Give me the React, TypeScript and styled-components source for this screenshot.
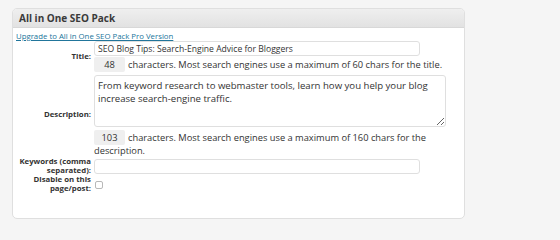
import React from 'react';
import styled, { createGlobalStyle } from 'styled-components';

const GlobalStyle = createGlobalStyle`
  html, body {
    margin: 0;
    padding: 0;
    background: #f5f5f5;
  }
  body {
    font-family: "Open Sans", "DejaVu Sans", sans-serif;
    color: #333;
  }
`;

const Page = styled.div`
  width: 560px;
  height: 235px;
  box-sizing: border-box;
  padding: 8px 0 0 12px;
`;

const Postbox = styled.div`
  width: 453px;
  height: 211px;
  box-sizing: border-box;
  background: #fff;
  border: 1px solid #dfdfdf;
  border-radius: 5px;
  overflow: hidden;
`;

const Handle = styled.h3`
  margin: 0;
  height: 18px;
  line-height: 18px;
  padding: 0 6px;
  font-size: 10px;
  font-weight: 700;
  color: #3a3a3a;
  background: linear-gradient(#efefef, #e2e2e2);
  border-bottom: 1px solid #d8d8d8;
`;

const Inside = styled.div`
  padding: 3px 3px 0 3px;
`;

const UpgradeLink = styled.a`
  display: block;
  height: 10px;
  line-height: 10px;
  font-size: 7.8px;
  color: #21759b;
  text-decoration: underline;
`;

const FormGrid = styled.div`
  display: grid;
  grid-template-columns: 75px 352px;
  column-gap: 3px;
  align-items: center;
`;

const Label = styled.label`
  text-align: right;
  font-weight: 700;
  font-size: 7.8px;
  line-height: 8.5px;
  color: #333;
`;

const Field = styled.div<{ $gap?: number; $top?: number }>`
  display: flex;
  flex-direction: column;
  gap: ${p => p.$gap ?? 1}px;
  margin-top: ${p => p.$top ?? 0}px;
`;

const TextInput = styled.input`
  width: 326px;
  height: 15px;
  box-sizing: border-box;
  margin: 0;
  padding: 0 3px;
  border: 1px solid #dfdfdf;
  border-radius: 3px;
  font-family: inherit;
  font-size: 8.6px;
  color: #333;
  background: #fff;
  outline: none;
`;

const TextArea = styled.textarea`
  width: 352px;
  height: 52px;
  box-sizing: border-box;
  margin: 0;
  padding: 3px 3px;
  border: 1px solid #dfdfdf;
  border-radius: 3px;
  font-family: inherit;
  font-size: 9.6px;
  line-height: 13px;
  color: #333;
  outline: none;
`;

const Counter = styled.p`
  margin: 0;
  font-size: 9.3px;
  line-height: 12px;
  color: #333;
`;

const CountBox = styled.span`
  display: inline-block;
  width: 31px;
  height: 15px;
  line-height: 15px;
  margin-right: 3px;
  text-align: center;
  background: #efefef;
  border-radius: 2px;
  color: #333;
`;

const Check = styled.input`
  appearance: none;
  width: 8px;
  height: 8px;
  margin: 0 0 0 1px;
  border: 1px solid #b8b8b8;
  border-radius: 2px;
  background: #fff;
`;

const CheckCell = styled.div`
  display: flex;
  align-items: center;
  height: 17px;
  margin-top: 2px;
`;

export default function App() {
  return (
    <Page>
      <GlobalStyle />
      <Postbox>
        <Handle>All in One SEO Pack</Handle>
        <Inside>
          <UpgradeLink href="#">Upgrade to All in One SEO Pack Pro Version</UpgradeLink>
          <FormGrid>
            <Label>Title:</Label>
            <Field>
              <TextInput defaultValue="SEO Blog Tips: Search-Engine Advice for Bloggers" />
              <Counter>
                <CountBox>48</CountBox>characters. Most search engines use a maximum of 60 chars for the title.
              </Counter>
            </Field>

            <Label>Description:</Label>
            <Field $gap={3} $top={3}>
              <TextArea defaultValue="From keyword research to webmaster tools, learn how you help your blog increase search-engine traffic." />
              <Counter>
                <CountBox>103</CountBox>characters. Most search engines use a maximum of 160 chars for the description.
              </Counter>
            </Field>

            <Label>
              Keywords (comma
              <br />
              separated):
            </Label>
            <Field $top={1}>
              <TextInput />
            </Field>

            <Label>
              Disable on this
              <br />
              page/post:
            </Label>
            <CheckCell>
              <Check type="checkbox" />
            </CheckCell>
          </FormGrid>
        </Inside>
      </Postbox>
    </Page>
  );
}
